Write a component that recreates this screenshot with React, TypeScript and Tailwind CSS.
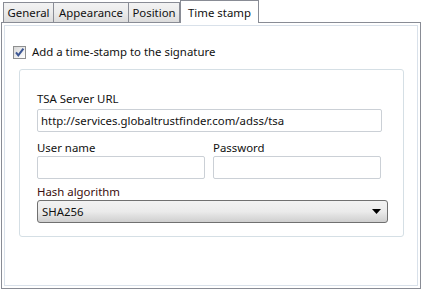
import React from 'react';

const tabs = [
  { label: 'General', w: 'w-[51px]' },
  { label: 'Appearance', w: 'w-[76px]' },
  { label: 'Position', w: 'w-[52px]' },
];

const CheckBox: React.FC = () => (
  <div className="w-[13px] h-[13px] border border-[#8e8f8f] bg-gradient-to-br from-[#d8d8d8] to-[#ffffff] relative shrink-0">
    <svg viewBox="0 0 11 11" className="absolute inset-0 w-[11px] h-[11px]">
      <path d="M2 5.3 L4.3 8.4 L9.4 1.6" fill="none" stroke="#3c5693" strokeWidth="2" />
    </svg>
  </div>
);

const TextBox: React.FC<{ value?: string; className?: string }> = ({ value, className }) => (
  <div className={`h-[23px] border border-[#cbd0d6] rounded-[2px] bg-white flex items-center px-[3px] text-[#111] ${className ?? ''}`}>
    {value}
  </div>
);

export default function App() {
  return (
    <div className="w-[422px] h-[290px] bg-white text-[11.4px] leading-[16px] text-[#111] font-['Noto_Sans',sans-serif]">
      {/* tab strip */}
      <div className="flex items-end h-[22px] pl-[3px]">
        {tabs.map((t) => (
          <div
            key={t.label}
            className={`${t.w} h-[20px] border border-b-0 border-[#898c95] bg-gradient-to-b from-[#f3f3f3] via-[#ebebeb] to-[#dcdcdc] flex items-center justify-center text-[#111] -mr-px`}
          >
            {t.label}
          </div>
        ))}
        <div className="w-[79px] h-[23px] border border-b-0 border-[#898c95] bg-white relative z-10 -mb-px ml-px flex items-start pt-[4px] justify-center">
          Time stamp
        </div>
      </div>

      {/* tab page */}
      <div className="ml-px w-[420px] h-[267px] border border-[#898c95] p-[2px]">
        <div className="h-full border border-[#d9e1ea] flex flex-col">
          <div className="flex items-center gap-[6px] pl-[8px] pt-[18px]">
            <CheckBox />
            <span>Add a time-stamp to the signature</span>
          </div>

          <div className="ml-[14px] mt-[9px] w-[385px] h-[168px] border border-[#d5dfe5] rounded-[3px] pl-[17px] flex flex-col">
            <div className="mt-[21px] h-[17px]">TSA Server URL</div>
            <TextBox className="w-[345px] mt-[1px]" value="http://services.globaltrustfinder.com/adss/tsa" />

            <div className="flex gap-[8px] mt-[8px]">
              <div className="flex flex-col">
                <div className="h-[16px]">User name</div>
                <TextBox className="w-[168px]" />
              </div>
              <div className="flex flex-col">
                <div className="h-[16px]">Password</div>
                <TextBox className="w-[168px]" />
              </div>
            </div>

            <div className="mt-[5px] h-[16px] text-[#3a0d0d]">Hash algorithm</div>
            <div className="w-[351px] h-[23px] border border-[#707070] rounded-[3px] bg-gradient-to-b from-[#f2f2f2] via-[#ebebeb] to-[#cfcfcf] flex items-center justify-between px-[4px]">
              <span>SHA256</span>
              <svg viewBox="0 0 9 5" className="w-[9px] h-[5px] mr-[2px]">
                <path d="M0 0 H9 L4.5 5 Z" fill="#000" />
              </svg>
            </div>
          </div>
        </div>
      </div>
    </div>
  );
}
